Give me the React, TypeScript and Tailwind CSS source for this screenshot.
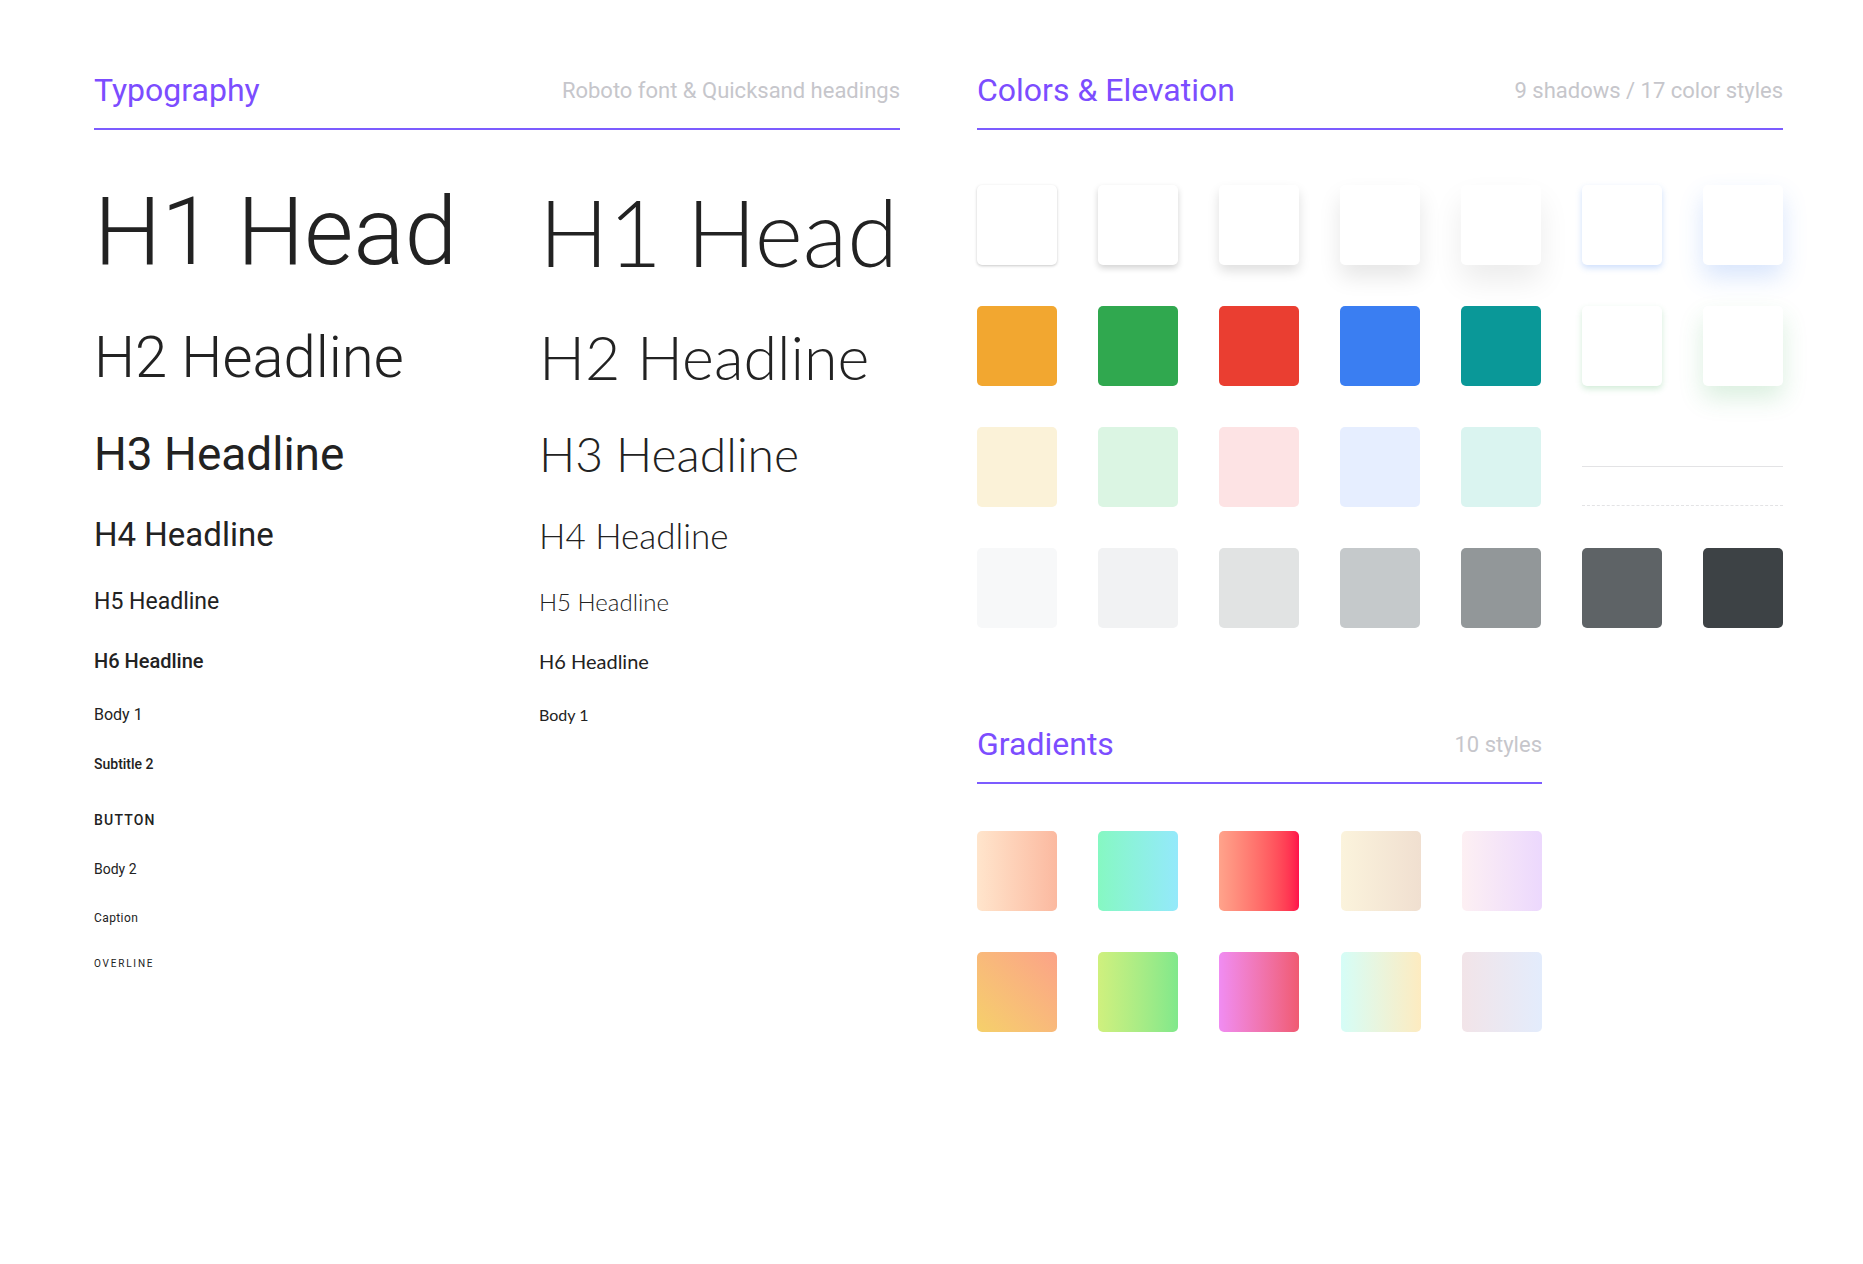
import React from 'react';

const roboto = { fontFamily: 'Roboto, "Liberation Sans", sans-serif' };
const quick = { fontFamily: 'Lato, "Open Sans", sans-serif' };

const rows = [
  { h: 'h-[134px]', l: 'text-[95px] font-light', r: 'text-[92px] font-light', text: 'H1 Head' },
  { h: 'h-[116px]', l: 'text-[58px] font-light', r: 'text-[61px] font-light', text: 'H2 Headline' },
  { h: 'h-[78px]', l: 'text-[46px] font-normal', r: 'text-[48px] font-light', text: 'H3 Headline' },
  { h: 'h-[84px]', l: 'text-[33px] font-normal', r: 'text-[35px] font-light', text: 'H4 Headline' },
  { h: 'h-[50px]', l: 'text-[23px]', r: 'text-[24px] font-light', text: 'H5 Headline' },
  { h: 'h-[68px]', l: 'text-[20px] font-medium', r: 'text-[20px]', text: 'H6 Headline' },
  { h: 'h-[40px]', l: 'text-[16px]', r: 'text-[16px]', text: 'Body 1' },
];

const extra = [
  { h: 'h-[58px]', c: 'text-[14px] font-medium', text: 'Subtitle 2' },
  { h: 'h-[54px]', c: 'text-[14px] font-medium tracking-[1.2px]', text: 'BUTTON' },
  { h: 'h-[44px]', c: 'text-[14px]', text: 'Body 2' },
  { h: 'h-[54px]', c: 'text-[12px] tracking-[0.4px]', text: 'Caption' },
  { h: 'h-[36px]', c: 'text-[10px] tracking-[1.8px]', text: 'OVERLINE' },
];

const Header = ({ title, note }: { title: string; note: string }) => (
  <div className="flex justify-between items-center h-[42px] mb-[17px] border-b-2 border-[#7c5cff]" style={roboto}>
    <span className="text-[32px] text-[#7c4dff] relative top-[-18px]">{title}</span>
    <span className="text-[22px] text-[#c6c6cb] relative top-[-18px]">{note}</span>
  </div>
);

const Swatch = ({ cls }: { cls: string }) => <div className={`w-[80px] h-[80px] rounded-[5px] ${cls}`} />;

const elev = [
  'bg-white shadow-[0_1px_3px_rgba(0,0,0,0.22)]',
  'bg-white shadow-[0_3px_6px_rgba(0,0,0,0.18)]',
  'bg-white shadow-[0_6px_12px_rgba(0,0,0,0.13)]',
  'bg-white shadow-[0_12px_22px_rgba(0,0,0,0.1)]',
  'bg-white shadow-[0_16px_30px_rgba(0,0,0,0.08)]',
  'bg-white shadow-[0_3px_6px_rgba(58,126,242,0.25)]',
  'bg-white shadow-[0_12px_24px_rgba(58,126,242,0.2)]',
];
const solid = [
  'bg-[#f2a730]', 'bg-[#30a84f]', 'bg-[#ea3e31]', 'bg-[#3a7ef2]', 'bg-[#0a9898]',
  'bg-white shadow-[0_3px_6px_rgba(48,168,79,0.22)]',
  'bg-white shadow-[0_12px_24px_rgba(48,168,79,0.18)]',
];
const light = ['bg-[#fbf2d8]', 'bg-[#dbf5e3]', 'bg-[#fde3e4]', 'bg-[#e6eeff]', 'bg-[#daf4f0]'];
const grays = ['bg-[#f7f8f9]', 'bg-[#f1f2f3]', 'bg-[#e1e3e3]', 'bg-[#c5c9cb]', 'bg-[#929799]', 'bg-[#5e6366]', 'bg-[#3d4245]'];
const grads = [
  'bg-gradient-to-r from-[#ffe5cc] to-[#fbb9a0]',
  'bg-gradient-to-r from-[#86f8c2] to-[#94e9fb]',
  'bg-gradient-to-r from-[#ffa38b] to-[#ff0f4a]',
  'bg-gradient-to-r from-[#fbf3dc] to-[#f0dfd0]',
  'bg-gradient-to-r from-[#fdf0f3] to-[#ecd8fd]',
  'bg-gradient-to-tr from-[#f5d06a] to-[#fba287]',
  'bg-gradient-to-r from-[#cff07e] to-[#80e88b]',
  'bg-gradient-to-r from-[#f08cf2] to-[#f05a72]',
  'bg-gradient-to-r from-[#d5fdf7] to-[#fdebc0]',
  'bg-gradient-to-r from-[#f2e4e8] to-[#e3ecfc]',
];

export default function App() {
  return (
    <div className="w-[1863px] h-[1264px] bg-white flex pl-[94px] pt-[88px] text-[#222]">
      <div className="w-[806px]">
        <Header title="Typography" note="Roboto font & Quicksand headings" />
        <div className="flex mt-[35px]">
          <div className="w-[445px]" style={roboto}>
            {rows.map(r => (
              <div key={r.text} className={`${r.h} flex items-center whitespace-nowrap ${r.l}`}>{r.text}</div>
            ))}
            {extra.map(r => (
              <div key={r.text} className={`${r.h} flex items-center ${r.c}`}>{r.text}</div>
            ))}
          </div>
          <div style={quick}>
            {rows.map(r => (
              <div key={r.text} className={`${r.h} flex items-center whitespace-nowrap ${r.r}`}>{r.text}</div>
            ))}
          </div>
        </div>
      </div>
      <div className="ml-[77px] w-[806px]">
        <Header title="Colors & Elevation" note="9 shadows / 17 color styles" />
        <div className="mt-[55px] flex flex-col gap-[41px]">
          <div className="flex gap-[41px]">{elev.map((c, i) => <Swatch key={i} cls={c} />)}</div>
          <div className="flex gap-[41px]">{solid.map((c, i) => <Swatch key={i} cls={c} />)}</div>
          <div className="flex gap-[41px]">
            {light.map((c, i) => <Swatch key={i} cls={c} />)}
            <div className="w-[201px] h-[80px] flex flex-col justify-end pb-[1px]">
              <div className="border-t border-[#e3e3e5] mb-[38px]" />
              <div className="border-t border-dashed border-[#e3e3e5]" />
            </div>
          </div>
          <div className="flex gap-[41px]">{grays.map((c, i) => <Swatch key={i} cls={c} />)}</div>
        </div>
        <div className="w-[565px] mt-[114px]">
          <Header title="Gradients" note="10 styles" />
          <div className="mt-[47px] grid grid-cols-5 gap-x-[41px] gap-y-[41px] w-[565px]">
            {grads.map((c, i) => <Swatch key={i} cls={c} />)}
          </div>
        </div>
      </div>
    </div>
  );
}
